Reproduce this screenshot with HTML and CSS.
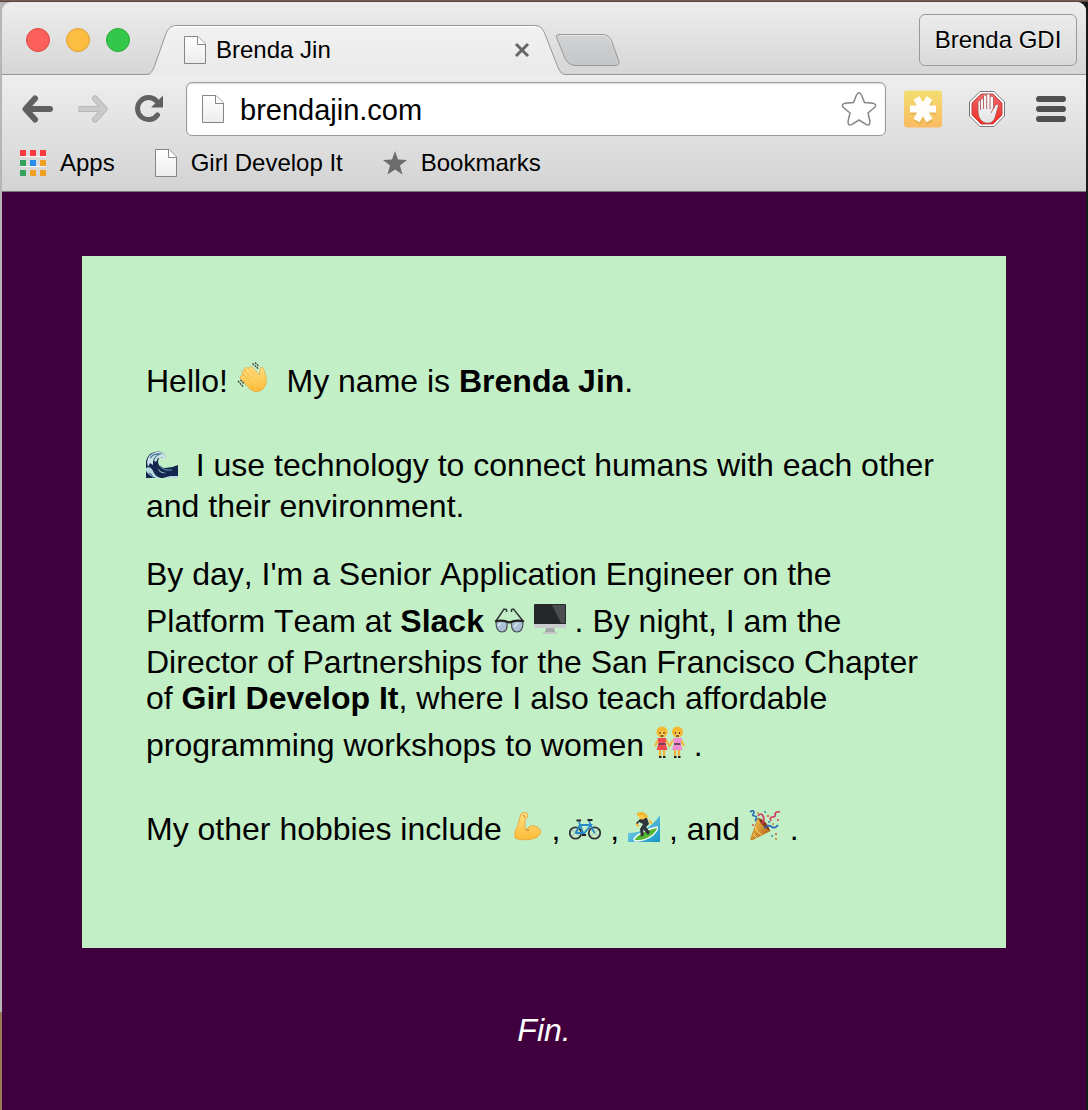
FILE: index.html
```html
<!DOCTYPE html>
<html lang="en">
<head>
<meta charset="utf-8">
<meta name="viewport" content="width=device-width, initial-scale=1">
<title>Brenda Jin</title>
<link rel="stylesheet" href="styles.css">
</head>
<body>
<svg class="defs" width="0" height="0" aria-hidden="true">
  <defs>
    <linearGradient id="paper" x1="0" y1="0" x2="0" y2="1"><stop offset="0" stop-color="#fff"/><stop offset="1" stop-color="#ececec"/></linearGradient>
    <linearGradient id="tabfill" x1="0" y1="0" x2="0" y2="1"><stop offset="0" stop-color="#f2f2f2"/><stop offset="1" stop-color="#e9e9e9"/></linearGradient>
    <linearGradient id="newfill" x1="0" y1="0" x2="0" y2="1"><stop offset="0" stop-color="#d2d3d4"/><stop offset="1" stop-color="#c5c6c7"/></linearGradient>
    <linearGradient id="gold" x1="0" y1="0" x2="0" y2="1"><stop offset="0" stop-color="#f3de70"/><stop offset="1" stop-color="#fbbb62"/></linearGradient>
    <linearGradient id="skin" x1="0" y1="0" x2="0" y2="1"><stop offset="0" stop-color="#ffdf80"/><stop offset="1" stop-color="#fdbb38"/></linearGradient>
    <linearGradient id="stopred" x1="0" y1="0" x2="0" y2="1"><stop offset="0" stop-color="#f4696a"/><stop offset=".5" stop-color="#ee4744"/><stop offset="1" stop-color="#ff2a20"/></linearGradient>
    <linearGradient id="palm" x1="0" y1="0" x2="0" y2="1"><stop offset="0" stop-color="#fff"/><stop offset="1" stop-color="#e2e2e2"/></linearGradient>
    <linearGradient id="cone" x1="0" y1="0" x2="1" y2="1"><stop offset="0" stop-color="#ffd65a"/><stop offset="1" stop-color="#a9500d"/></linearGradient>
    <linearGradient id="sea" x1="0" y1="0" x2="1" y2="1"><stop offset="0" stop-color="#8fdcf0"/><stop offset="1" stop-color="#1596c4"/></linearGradient>
    <symbol id="doc" viewBox="0 0 22 28"><path d="M.5.5H14L21.500 8V27.500H.5Z" fill="url(#paper)" stroke="#858585"/><path d="M13.500 .5V8.500H21.500" fill="#fff" stroke="#858585"/></symbol>
  </defs>
</svg>
<div class="window">
  <header class="chrome">
    <div class="tabstrip">
      <div class="lights">
        <button class="light light-close" aria-label="Close window"></button>
        <button class="light light-min" aria-label="Minimize window"></button>
        <button class="light light-max" aria-label="Zoom window"></button>
      </div>
      <div class="tab">
        <svg class="tab-shape" viewBox="0 0 422 50" aria-hidden="true">
          <path d="M0 50V49.500C5 49.500 6.500 46 8.500 41L18 14C21.500 4 23.500 .5 31 .5H388C394 .5 396.500 3 399 9L411 40C413.500 46 415 49.500 420 49.500H422V50Z" fill="url(#tabfill)"/>
          <path d="M0 49.500C5 49.500 6.500 46 8.500 41L18 14C21.500 4 23.500 .5 31 .5H388C394 .5 396.500 3 399 9L411 40C413.500 46 415 49.500 420 49.500H422" fill="none" stroke="#969696"/>
          <path d="M28 1.500H390" stroke="#fff"/>
        </svg>
        <div class="tab-label">
          <svg class="doc" aria-hidden="true"><use href="#doc"/></svg>
          <span class="tab-title">Brenda Jin</span>
          <button class="tab-close" aria-label="Close tab"><svg width="16" height="16" viewBox="0 0 16 16"><path d="M2 2L14 14M14 2L2 14" stroke="#666" stroke-width="3"/></svg></button>
        </div>
      </div>
      <button class="new-tab" aria-label="New tab">
        <svg width="66" height="34" viewBox="0 0 66 34"><path d="M4 1.500H47C52 1.500 55 4 57 9L63.500 27C65 31 63.500 32.500 60 32.500H21C15 32.500 11.500 29 9.500 24L2 6C.8 3 1.500 1.500 4 1.500Z" fill="url(#newfill)" stroke="#999"/><path d="M5 2.500H47C51 2.500 54 5 56 9.500" fill="none" stroke="#e4e4e4"/></svg>
      </button>
      <button class="profile">Brenda GDI</button>
    </div>
    <div class="toolbar">
      <nav class="nav" aria-label="Navigation">
        <button class="icon" aria-label="Back"><svg width="32" height="28" viewBox="0 0 32 28"><path d="M4 14H28M13 3.500L3.500 14L13 24.500" fill="none" stroke="#606060" stroke-width="6" stroke-linecap="round" stroke-linejoin="round"/></svg></button>
        <button class="icon" aria-label="Forward"><svg width="32" height="28" viewBox="0 0 32 28"><path d="M2 14H26M17 3.500L26.500 14L17 24.500" fill="none" stroke="#b2b2b2" stroke-width="6" stroke-linecap="round" stroke-linejoin="round"/><path d="M2 14H26M17 3.500L26.500 14L17 24.500" fill="none" stroke="#cacaca" stroke-width="4.500" stroke-linecap="round" stroke-linejoin="round"/></svg></button>
        <button class="icon" aria-label="Reload"><svg width="32" height="28" viewBox="0 0 32 28"><path d="M23.500 20A11 11 0 1 1 22.500 6" fill="none" stroke="#606060" stroke-width="5" stroke-linecap="round"/><path d="M29 .5V12.500H17Z" fill="#606060"/></svg></button>
      </nav>
      <div class="omnibox">
        <svg class="doc doc-tall" aria-hidden="true"><use href="#doc"/></svg>
        <input class="url" type="text" value="brendajin.com" aria-label="Address">
        <button class="icon" aria-label="Bookmark this page"><svg width="36" height="36" viewBox="0 0 36 36"><path d="M15.500 4Q18 -.5 20.500 4L23.500 11.500L32 12.300Q36.500 13.500 33.500 16.500L27 22L29 30.500Q29 35.500 25 33.300L18 29L11 33.300Q7 35.500 7 30.500L9 22L2.500 16.500Q-.5 13.500 4 12.300L12.500 11.500Z" fill="#fff" stroke="#858585" stroke-width="1.500"/></svg></button>
      </div>
      <div class="extensions">
        <button class="icon" aria-label="Asterisk extension"><svg width="38" height="38" viewBox="0 0 38 38"><rect y=".5" width="38" height="37" rx="3" fill="url(#gold)"/><g stroke="#b98b25" stroke-opacity=".3" stroke-width="7"><path d="M6 21H32M13 9L26 33M26 9L13 33"/></g><path d="M6 19H32M12.500 8L25.500 30.500M25.500 8L12.500 30.500" stroke="#fffdfa" stroke-width="7"/></svg></button>
        <button class="icon" aria-label="Ad blocker"><svg width="38" height="38" viewBox="0 0 38 38"><path d="M12 1.500H26L36.500 12V26L26 36.500H12L1.500 26V12Z" fill="#fff" stroke="#777"/><path d="M13 4H25L34 13V25L25 34H13L4 25V13Z" fill="url(#stopred)" stroke="#b84846"/><path d="M12.500 20V9.500Q14 7.500 15.500 9.500V6Q17 3.500 18.700 6V4.500Q20.500 2.500 22 5V7Q24 5 25.500 7.500V19L27 15.500Q29 13 30.500 15.500L27.500 26Q26 32 21.500 33H17.500Q10.500 31 10 22V11.500Q11.200 9.500 12.500 11.500Z" fill="url(#palm)" stroke="#a7504e" stroke-width=".8"/><path d="M12.500 11V20M15.500 8V19M18.700 6V19M22 7V19M25.500 18L23 23" fill="none" stroke="#b66" stroke-width="1"/></svg></button>
      </div>
      <button class="icon" aria-label="Menu"><svg width="30" height="28" viewBox="0 0 30 28"><path d="M3 4H27M3 14H27M3 24H27" stroke="#505050" stroke-width="6" stroke-linecap="round"/></svg></button>
    </div>
    <nav class="bookmarks" aria-label="Bookmarks bar">
      <a class="bookmark" href="#apps"><svg width="26" height="26" viewBox="0 0 26 26" aria-hidden="true"><g fill="#fff" opacity=".7"><path d="M0 6h26v1H0zM0 16h26v1H0zM0 25h6v1H0zM10 25h6v1h-6zM20 25h6v1h-6z"/></g><path d="M0 0h6v6H0zM10 0h6v6h-6zM20 0h6v6h-6z" fill="#f63a3d"/><path d="M0 10h6v6H0zM0 20h6v6H0z" fill="#35a15d"/><path d="M10 10h6v6h-6z" fill="#278ef0"/><path d="M20 10h6v6h-6zM10 20h6v6h-6zM20 20h6v6h-6z" fill="#f0a125"/></svg>Apps</a>
      <a class="bookmark" href="#gdi"><svg class="doc" aria-hidden="true"><use href="#doc"/></svg>Girl Develop It</a>
      <a class="bookmark" href="#bookmarks"><svg width="24" height="24" viewBox="0 0 24 24" aria-hidden="true"><path d="M12 0L15 8.500L24 9L17 14.500L19.500 23.500L12 18.500L4.500 23.500L7 14.500L0 9L9 8.500Z" fill="#6c6c6c"/></svg>Bookmarks</a>
    </nav>
  </header>
  <main class="page">
    <article class="card">
      <p>Hello! <svg class="emoji" viewBox="0 0 32 32" role="img" aria-label="waving hand"><path d="M4 14Q5 11.500 7 13L5 10.500Q5 7.500 8 9L7.500 6.500Q9 4 11.500 6.500L12.500 5Q14.500 4 16 6L22.500 13L23 6.500Q24.500 3.500 26.500 6.500L29 15Q30.500 22.500 25.500 27.500Q19 32 13 27L4.500 18Q2 16 4 14Z" fill="url(#skin)" stroke="#e6a43a" stroke-width=".7"/><path d="M7 13L12 18M8 9L14.500 15.500M11.500 6.500L17.500 13" fill="none" stroke="#e9ab42" stroke-width=".8"/><path d="M15.500 1.500L21 6.500M18 .5L22 4.500M1 19L6 24.500M3.500 18L7.500 22" fill="none" stroke="#333" stroke-width="1.200" stroke-dasharray="2 .8"/></svg>&nbsp; My name is <b>Brenda Jin</b>.</p>
      <p><svg class="emoji" viewBox="0 0 32 32" role="img" aria-label="wave"><path d="M0 32V15Q2 7 9 6Q16 4 20 11L18 12Q13 10 12 15Q12 22 19 22Q26 22 32 19V32Z" fill="#13264d"/><path d="M1 16Q2 8 10 6Q17 5 20 11L18 14L16 11L14 13L12 12L10 16L7 14L7 19L4 17L2 21Z" fill="#c9e3e6"/><path d="M0 22Q5 19 8 27Q10 31 15 32H10Q3 30 0 25ZM11 19Q12 26 20 27Q16 28 13 25ZM17 32L24 30L32 30V32Z" fill="#b8dbe2"/><path d="M4 12Q8 7 14 8Q9 10 8 14M3 27Q6 28 7 32M14 20Q18 25 26 24" fill="none" stroke="#497b98" stroke-width="1.300"/></svg>&nbsp; I use technology to connect humans with each other and their environment.</p>
      <p>By day, I'm a Senior Application Engineer on the Platform Team at <b>Slack</b> <svg class="emoji" viewBox="0 0 32 32" role="img" aria-label="glasses"><path d="M3 19L11 7L13.500 7.500V10M30 19L20.500 7L18.500 7.500V10" fill="none" stroke="#303438" stroke-width="1.500"/><path d="M3 20Q9 18 14 20.500Q15 30 9 30Q3 30 3 20ZM30 20Q24 18 18.500 20.500Q18 30 24 30Q30 30 30 20Z" fill="#a9c0d5" stroke="#4c5258" stroke-width="1.200"/><path d="M2 19.500Q9 17 16.300 20.500Q24 17 31 19.500" fill="none" stroke="#222" stroke-width="2"/><path d="M5 24L8 21M21 25L25 21" stroke="#e0eaf2" stroke-width="1.500"/></svg> <svg class="emoji" viewBox="0 0 32 32" role="img" aria-label="computer"><path d="M12 26H20L21 30H11Z" fill="#a5a8ab"/><path d="M9 30H23V32H9Z" fill="#c5c7c9"/><rect y="2" width="32" height="24" rx="1" fill="#c9cccf"/><path d="M0 3Q0 2 1 2H31Q32 2 32 3V22H0Z" fill="#252729"/><path d="M18 3H31V21H27Z" fill="#4b4e50"/></svg> . By night, I am the Director of Partnerships for the San Francisco Chapter of <b>Girl Develop It</b>, where I also teach affordable programming workshops to women <svg class="emoji" viewBox="0 0 32 32" role="img" aria-label="two women"><path d="M7 23V31M11 23V31M22 23V31M26 23V31" stroke="#f4b33c" stroke-width="2.200"/><path d="M6 30H8.500V32H6ZM10 30H12.500V32H10ZM21 30H23.500V32H21ZM25 30H27.500V32H25Z" fill="#222"/><path d="M5 14L2 20M13 14L16.500 20L20 14M28 14L31 20" fill="none" stroke="#f4b33c" stroke-width="2"/><path d="M4.500 12H13.500L12.500 17L14.500 24H3.500L5.500 17Z" fill="#ee4c50"/><path d="M20 12H29L27.500 17L29.500 24H19L21 17Z" fill="#f38bd0"/><path d="M5.500 17H12.500V19H5.500ZM21 17H27.500V19H21Z" fill="#76405f"/><circle cx="9" cy="6" r="5.500" fill="#f5b82e"/><circle cx="24.500" cy="6" r="5.500" fill="#f5b82e"/><path d="M5.500 6.500Q9 4 12.500 6.500Q12 11 9 11Q6 11 5.500 6.500ZM21 6.500Q24.500 4 28 6.500Q27.500 11 24.500 11Q21.500 11 21 6.500Z" fill="#ffcc54"/><path d="M7 6V8M11 6V8M22.500 6V8M26.500 6V8M7.500 10H10.500M23 10H26" stroke="#603922" stroke-width="1.300"/></svg> .</p>
      <p>My other hobbies include <svg class="emoji" viewBox="0 0 32 32" role="img" aria-label="flexed arm"><path d="M4 28Q2.500 22 7 15L9 7Q9 3 13 2.500Q17 2 17 5.500Q16.500 8.500 14 8.500L14 14Q13 18 15 19.500Q19 14.500 24 16Q30 18 29.500 23Q28 28 19 29.500Q9 30.500 4 28Z" fill="url(#skin)" stroke="#e8a038" stroke-width=".8"/><path d="M12 5L14 7M15 19.500Q16 21 18 20" fill="none" stroke="#b9762b" stroke-width="1"/></svg> , <svg class="emoji" viewBox="0 0 32 32" role="img" aria-label="bicycle"><g fill="none"><circle cx="6.500" cy="23" r="5.700" stroke="#303439" stroke-width="1.800"/><circle cx="25.500" cy="23" r="5.700" stroke="#303439" stroke-width="1.800"/><path d="M3 20L10 26M10 20L3 26M22 20L29 26M29 20L22 26" stroke="#99a" stroke-width=".7"/><path d="M6.500 23L11 15H22L14.500 24L10 12M6.500 23H14.500M20 11L25.500 23" stroke="#2688c9" stroke-width="1.800"/><path d="M7.500 10.500H12M18.500 10H23.500M13 25H17" stroke="#222" stroke-width="1.800"/></g></svg> , <svg class="emoji" viewBox="0 0 32 32" role="img" aria-label="surfer"><path d="M32 5V32H0V23Q20 23 32 5Z" fill="url(#sea)"/><path d="M6 29Q12 21 29 17Q31 19 25 25Q18 31 7 31Z" fill="#55b632" stroke="#fff" stroke-width="1.300"/><path d="M13 8L19 8L21 14L18 17L22 22L20 25L15 19L16 25L13 27L12 19L15 14L11 12L9 15L8 13Z" fill="#303338"/><path d="M8 14L11 16M21 10L24 14" stroke="#f6b93c" stroke-width="2"/><circle cx="14" cy="6" r="3.500" fill="#ffc84e"/><path d="M9 3Q15 0 19 5Q22 8 17 8L15 5L9 6Z" fill="#efb82e"/></svg> , and <svg class="emoji" viewBox="0 0 32 32" role="img" aria-label="party popper"><path d="M9 8Q17 12 21 21L3 30Q1 30 2 28Z" fill="url(#cone)" stroke="#bc6d16" stroke-width=".6"/><path d="M9 8Q18 10 21 21Q12 16 9 8Z" fill="#8b3c15"/><path d="M6 17Q8 23 13 25M4 24L8 28" stroke="#ffd765" fill="none"/><path d="M1 2Q5 -1 5 3Q2 6 6 6Q9 7 6 11M15 18Q19 14 23 17Q26 19 29 15" fill="none" stroke="#2868b4" stroke-width="1.700"/><path d="M9 6Q12 2 14 6Q16 10 13 14M22 11Q20 7 24 7Q27 7 26 4Q27 1 31 2" fill="none" stroke="#cf3d64" stroke-width="1.700"/><g fill="#d94a3b"><circle cx="19" cy="6" r="1"/><circle cx="27" cy="24" r="1"/><circle cx="4" cy="15" r="1"/><circle cx="29" cy="10" r="1"/></g><g fill="#338dad"><circle cx="16" cy="2" r="1"/><circle cx="23" cy="26" r="1"/><circle cx="20" cy="12" r="1"/></g><g fill="#bf8a2c"><circle cx="24" cy="14" r="1"/><circle cx="27" cy="29" r="1"/><circle cx="9" cy="3" r="1"/></g></svg> .</p>
    </article>
    <footer class="fin">Fin.</footer>
  </main>
</div>
</body>
</html>
```
FILE: styles.css
```css
* {
  box-sizing: border-box;
}

body {
  margin: 0;
  min-height: 100vh;
  padding: 2px 2px 0;
  font-family: "Liberation Sans", Arial, sans-serif;
  font-kerning: none;
  color: #000;
  /* desktop visible around the window */
  background:
    linear-gradient(#8a6a60, #4b342f) top / 100% 2px no-repeat,
    linear-gradient(#b4b6b8 0 91%, #987a58 91%) left / 50% 100% no-repeat,
    #151b18;
}

.defs {
  position: absolute;
}

button {
  margin: 0;
  padding: 0;
  border: 0;
  background: none;
  font: inherit;
  color: inherit;
}

svg {
  display: block;
}

.window {
  display: flex;
  flex-direction: column;
  min-height: calc(100vh - 2px);
  border-radius: 9px 9px 0 0;
  overflow: hidden;
  background: #3f003d;
}

.chrome {
  border-bottom: 1px solid #777;
  background: linear-gradient(#eee 72px, #d3d3d3);
  font-size: 24px;
}

.tabstrip {
  display: flex;
  align-items: flex-end;
  height: 73px;
  padding: 0 9px 0 24px;
  border-bottom: 1px solid #969696;
  background: linear-gradient(#ededed, #d6d6d6);
}

.lights {
  display: flex;
  gap: 16px;
  margin: 0 16px 22px 0;
}

.light {
  width: 24px;
  height: 24px;
  border: 1px solid;
  border-radius: 50%;
}

.light-close {
  background: #fc605b;
  border-color: #de4744;
}

.light-min {
  background: #fdbd41;
  border-color: #dd9f33;
}

.light-max {
  background: #34c84a;
  border-color: #27aa35;
}

.tab {
  display: grid;
  flex: none;
  width: 422px;
  height: 50px;
  margin-bottom: -1px;
}

.tab-shape,
.tab-label {
  grid-area: 1 / 1;
}

.tab-label {
  display: flex;
  align-items: center;
  padding: 0 38px;
}

.tab-title {
  flex: 1;
  padding-left: 10px;
}

.doc {
  flex: none;
  width: 22px;
  height: 28px;
}

.doc-tall {
  height: 30px;
}

.new-tab {
  margin: 0 0 7px -13px;
}

.profile {
  width: 158px;
  height: 52px;
  margin: 0 0 8px auto;
  border: 1px solid #999;
  border-radius: 6px;
  background: linear-gradient(#ebebeb, #dadada);
  text-shadow: 0 1px #fff;
}

.toolbar {
  display: flex;
  align-items: center;
  padding: 7px 20px 0;
}

.nav {
  display: flex;
  gap: 24px;
  margin-right: 20px;
}

.icon {
  flex: none;
}

.omnibox {
  display: flex;
  flex: 1;
  align-items: center;
  min-width: 0;
  height: 54px;
  padding: 0 8px 0 15px;
  border: 1px solid #999;
  border-radius: 6px;
  background: #fff;
  box-shadow: inset 0 1px 2px #ddd;
}

.url {
  flex: 1;
  min-width: 0;
  padding: 2px 0 0 16px;
  border: 0;
  outline: 0;
  background: none;
  font: 29px "Liberation Sans", Arial, sans-serif;
  color: #000;
}

.extensions {
  display: flex;
  gap: 26px;
  margin: 0 30px 0 18px;
}

.bookmarks {
  display: flex;
  align-items: center;
  gap: 40px;
  height: 54px;
  padding: 0 18px;
  margin-bottom: 1px;
}

.bookmark {
  display: flex;
  align-items: center;
  gap: 14px;
  color: #000;
  text-decoration: none;
}

.page {
  flex: 1;
  padding: 64px 80px;
  font-size: 32px;
  line-height: 36px;
}

.card {
  padding: 64px;
  background: #c3efc6;
}

.card p {
  margin: 32px 0;
}

.emoji {
  display: inline-block;
  box-sizing: content-box;
  width: 32px;
  height: 32px;
  padding: 10px 0;
  vertical-align: -12px;
}

.fin {
  margin-top: 64px;
  color: #fff;
  font-style: italic;
  text-align: center;
}
```
